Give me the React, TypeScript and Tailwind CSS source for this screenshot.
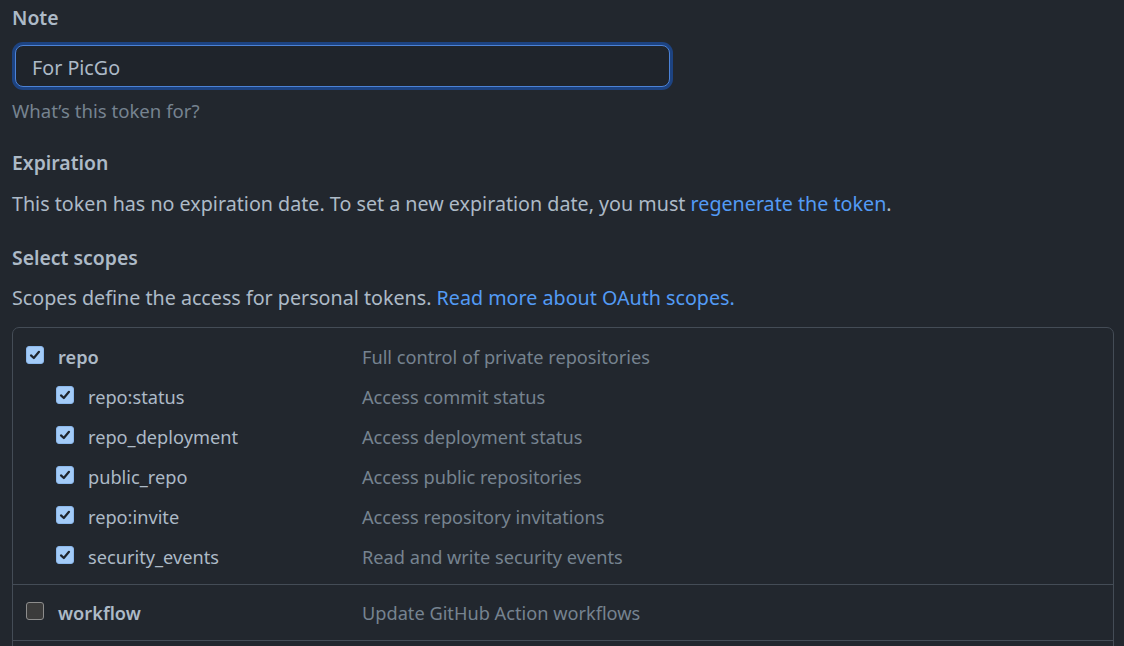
import React from "react";

type Scope = {
  name: string;
  desc: string;
  checked: boolean;
  child?: boolean;
};

const repoScopes: Scope[] = [
  { name: "repo", desc: "Full control of private repositories", checked: true },
  { name: "repo:status", desc: "Access commit status", checked: true, child: true },
  { name: "repo_deployment", desc: "Access deployment status", checked: true, child: true },
  { name: "public_repo", desc: "Access public repositories", checked: true, child: true },
  { name: "repo:invite", desc: "Access repository invitations", checked: true, child: true },
  { name: "security_events", desc: "Read and write security events", checked: true, child: true },
];

const Checkbox = ({ checked }: { checked: boolean }) => {
  if (checked) {
    return (
      <span className="flex items-center justify-center w-[18px] h-[18px] rounded-[3px] bg-[#a3cbf7] border border-[#8bb8ec] shrink-0">
        <svg width="12" height="12" viewBox="0 0 12 12">
          <path d="M2 6.4 L4.8 9 L10 2.8" fill="none" stroke="#1f242b" strokeWidth="2.2" strokeLinecap="round" strokeLinejoin="round" />
        </svg>
      </span>
    );
  }
  return <span className="block w-[18px] h-[18px] rounded-[3px] bg-[#3b3b3b] border-[1.5px] border-[#8d8d8d] shrink-0" />;
};

const ScopeRow = ({ scope }: { scope: Scope }) => (
  <div className="flex items-center h-[40px] text-[18.2px]">
    <div className={`flex items-center gap-[14px] w-[349px] ${scope.child ? "pl-[43px]" : "pl-[13px]"}`}>
      <div className="-mt-[5px]">
        <Checkbox checked={scope.checked} />
      </div>
      <span className={scope.child ? "text-[#adbac7]" : "font-semibold text-[#adbac7]"}>{scope.name}</span>
    </div>
    <span className="text-[#768390]">{scope.desc}</span>
  </div>
);

export default function App() {
  return (
    <div
      className="h-screen w-full bg-[#22272e] text-[#adbac7] text-[19.7px] leading-[24px] pl-[12px] pr-[10px] pt-[6px] overflow-hidden"
      style={{ fontFamily: "'Noto Sans', sans-serif" }}
    >
      <label className="block font-semibold text-[19.4px]">Note</label>
      <div className="mt-[15px] w-[655px] h-[42px] ml-[3px] rounded-[8px] border border-[#4c82d6] bg-[#1f242b] shadow-[0_0_0_3px_#1d4381] flex items-center pl-[16px] pt-[3px]">
        <span className="text-[#adbac7]">For PicGo</span>
      </div>
      <p className="mt-[12px] text-[#768390] text-[18.6px]">What’s this token for?</p>

      <h3 className="mt-[28px] font-semibold text-[19.4px]">Expiration</h3>
      <p className="mt-[17px]">
        This token has no expiration date. To set a new expiration date, you must{" "}
        <a className="text-[#539bf5]">regenerate the token</a>.
      </p>

      <h3 className="mt-[30px] font-semibold text-[19.4px]">Select scopes</h3>
      <p className="mt-[16px]">
        Scopes define the access for personal tokens.{" "}
        <a className="text-[#539bf5]">Read more about OAuth scopes.</a>
      </p>

      <div className="mt-[17px] border border-[#444c56] rounded-[7px]">
        <div className="pt-[9px] pb-[7px]">
          {repoScopes.map((s) => (
            <ScopeRow key={s.name} scope={s} />
          ))}
        </div>
        <div className="border-t border-[#444c56] pt-[8px] pb-[7px]">
          <ScopeRow scope={{ name: "workflow", desc: "Update GitHub Action workflows", checked: false }} />
        </div>
        <div className="border-t border-[#444c56] h-[40px]" />
      </div>
    </div>
  );
}
